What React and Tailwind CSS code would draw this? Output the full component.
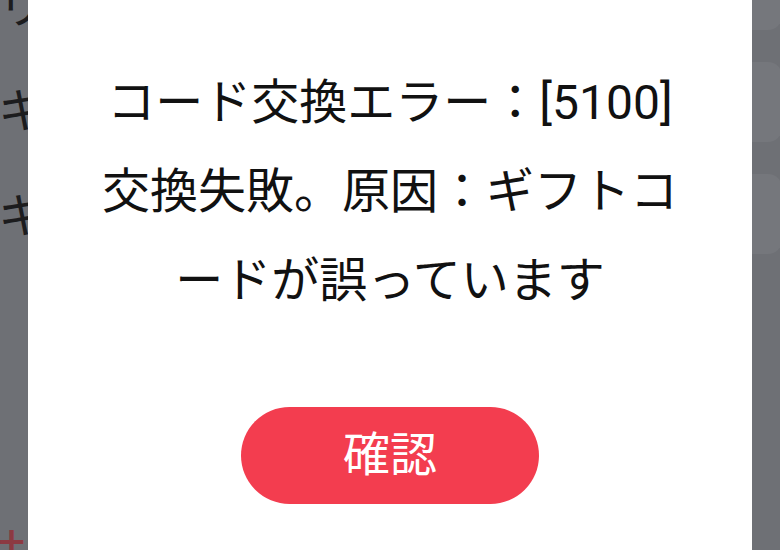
import React from 'react';

const jp = { fontFamily: 'Roboto, "Noto Sans CJK JP", sans-serif' };

function BackdropPage() {
  return (
    <div className="flex h-full w-full bg-[#6e7075]">
      {/* left column: labels peeking out from behind the dialog */}
      <div className="w-[28px] shrink-0 overflow-hidden">
        <div className="-ml-[2px] -mt-[46px] flex w-[60px] flex-col text-[48px] leading-[105px] text-[#1c1c1e]" style={jp}>
          <span>リ</span>
          <span>キ</span>
          <span>キ</span>
          <span className="mt-[220px] text-[#8c3a42]">+</span>
        </div>
      </div>
      <div className="flex-1" />
      {/* right column: list cards */}
      <div className="flex w-[28px] shrink-0 flex-col gap-[32px] overflow-hidden">
        <div className="-mt-[50px] h-[80px] w-[50px] -ml-[20px] rounded-[14px] bg-[#75777c]" />
        <div className="h-[80px] w-[50px] -ml-[20px] rounded-[14px] bg-[#75777c]" />
        <div className="h-[80px] w-[50px] -ml-[20px] rounded-[14px] bg-[#75777c]" />
      </div>
    </div>
  );
}

export default function App() {
  return (
    <div className="relative h-[550px] w-[780px] overflow-hidden" style={jp}>
      <BackdropPage />

      {/* dialog */}
      <div className="absolute left-[28px] right-[28px] -top-[40px] h-[640px] rounded-[28px] bg-white">
        <div className="flex flex-col items-center px-[58px] pt-[98px]">
          <p className="text-center text-[48px] leading-[89px] text-[#111]">
            コード交換エラー：[5100] 交換失敗。原因：ギフトコードが誤っています
          </p>
          <button className="mt-[82px] flex h-[97px] w-[298px] items-center justify-center rounded-full bg-[#f33d4f] text-[47px] text-white">
            確認
          </button>
        </div>
      </div>
    </div>
  );
}
